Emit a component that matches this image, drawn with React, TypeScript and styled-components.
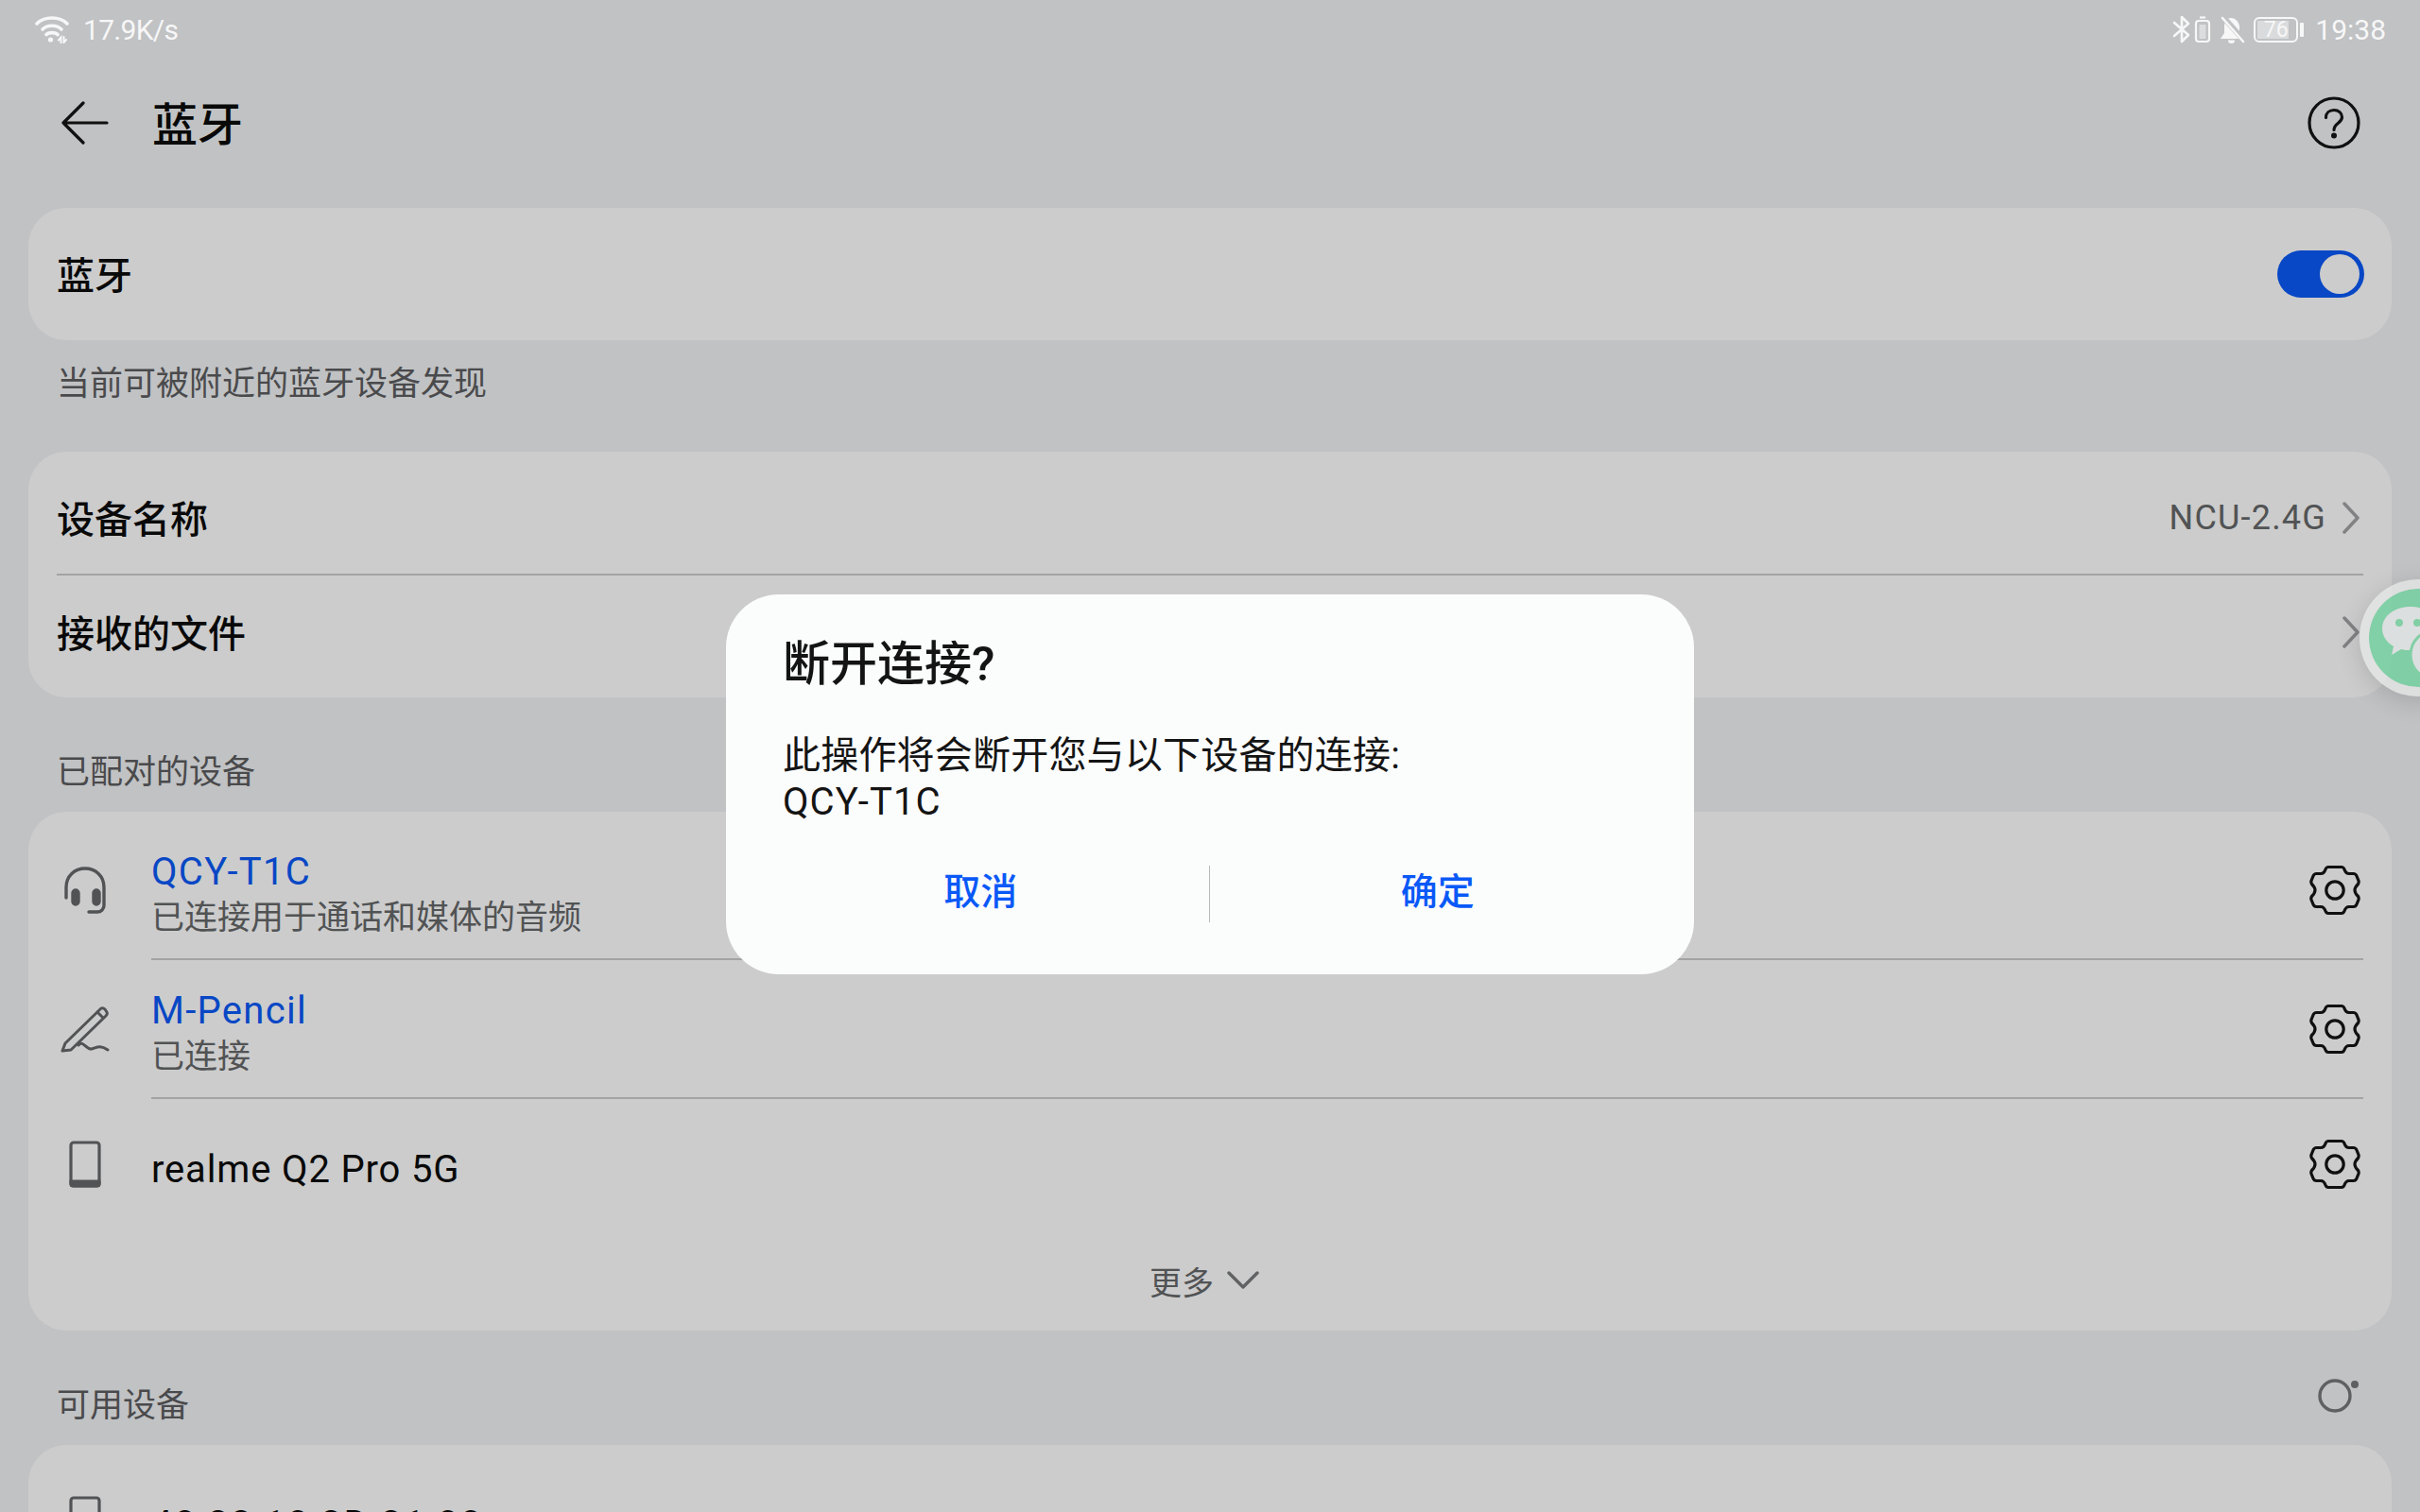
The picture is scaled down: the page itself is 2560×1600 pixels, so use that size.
import React from "react";
import styled, { createGlobalStyle } from "styled-components";

const GlobalStyle = createGlobalStyle`
  html, body {
    margin: 0;
    padding: 0;
  }
  body {
    font-family: Roboto, "Noto Sans CJK SC", sans-serif;
  }
`;

const Screen = styled.div`
  position: relative;
  width: 2560px;
  height: 1600px;
  overflow: hidden;
  background: #f1f3f5;
  color: #0c0c0c;
`;

const Header = styled.header`
  height: 136px;
  margin: 62px 0 22px;
  padding: 0 63px 0 65px;
  display: flex;
  align-items: center;
`;

const PageTitle = styled.h1`
  flex: 1;
  margin: 0 0 0 46px;
  padding-top: 5px;
  font-size: 48px;
  font-weight: 500;
  line-height: 60px;
`;

const Card = styled.section<{ $top?: number; $bottom?: number }>`
  margin: 0 30px;
  padding: ${(p) => p.$top ?? 0}px 0 ${(p) => p.$bottom ?? 0}px;
  background: #fff;
  border-radius: 40px;
`;

const Row = styled.div<{ $h: number }>`
  height: ${(p) => p.$h}px;
  display: flex;
  align-items: center;
  padding: 0 33px 0 30px;
`;

const SimpleRow = styled(Row)`
  justify-content: space-between;
`;

const RowLabel = styled.span`
  font-size: 40px;
  font-weight: 500;
  line-height: 50px;
  padding-top: 6px;
`;

const Hairline = styled.div<{ $left: number }>`
  height: 2px;
  margin: -1px 30px -1px ${(p) => p.$left}px;
  background: rgba(0, 0, 0, 0.2);
`;

const Caption = styled.div`
  height: 118px;
  padding: 24px 60px 0;
  box-sizing: border-box;
  font-size: 35px;
  line-height: 46px;
  color: #5d5d5f;
`;

const SectionHead = styled.div`
  height: 121px;
  padding: 0 63px 18px 60px;
  box-sizing: border-box;
  display: flex;
  align-items: flex-end;
  justify-content: space-between;
  font-size: 35px;
  line-height: 46px;
  color: #5d5d5f;
`;

const RefreshIcon = styled.svg`
  align-self: flex-start;
  margin-top: 47px;
`;

const Toggle = styled.div`
  width: 92px;
  height: 50px;
  box-sizing: border-box;
  padding: 4px 5px;
  margin-right: -4px;
  border-radius: 25px;
  background: #0a59f7;
  display: flex;
  justify-content: flex-end;
`;

const Knob = styled.div`
  width: 42px;
  height: 42px;
  border-radius: 50%;
  background: #fff;
`;

const ValueGroup = styled.div`
  display: flex;
  align-items: center;
  gap: 17px;
  margin-right: 1px;
  color: #66686a;
  font-size: 36px;
  letter-spacing: 1.2px;
`;

const DeviceIcon = styled.div`
  width: 60px;
  margin-right: 40px;
  flex: none;
  display: flex;
  justify-content: center;
`;

const DeviceText = styled.div`
  flex: 1;
  padding-top: 10px;
  display: flex;
  flex-direction: column;
`;

const DeviceName = styled.div<{ $active?: boolean }>`
  font-size: 40px;
  line-height: 50px;
  margin-top: ${(p) => (p.$active ? 0 : 2)}px;
  color: ${(p) => (p.$active ? "#0a59f7" : "#0c0c0c")};
  letter-spacing: ${(p) => (p.$active ? 1.3 : 0.85)}px;
`;

const DeviceAddress = styled(DeviceName)`
  letter-spacing: 1.7px;
`;

const DeviceStatus = styled.div`
  font-size: 35px;
  line-height: 48px;
  color: #66686a;
`;

const MoreRow = styled.div`
  height: 106px;
  display: flex;
  align-items: center;
  justify-content: center;
  gap: 14px;
  padding-right: 12px;
  font-size: 34px;
  color: #66686a;
`;

const Scrim = styled.div`
  position: absolute;
  inset: 0;
  background: rgba(0, 0, 0, 0.2);
  display: flex;
  justify-content: center;
  padding-top: 629px;
  box-sizing: border-box;
`;

const Dialog = styled.div`
  width: 1024px;
  height: 402px;
  box-sizing: border-box;
  padding: 43px 26px 0;
  background: #fbfcfc;
  border-radius: 56px;
`;

const DialogTitle = styled.h2`
  margin: 0 34px;
  font-size: 50px;
  font-weight: 500;
  line-height: 62px;
  color: #141414;
`;

const DialogBody = styled.p`
  margin: 41px 34px 0;
  font-size: 40px;
  line-height: 49px;
  letter-spacing: 0.2px;
  color: #141414;
`;

const DialogDevice = styled.span`
  letter-spacing: 1.1px;
`;

const DialogActions = styled.div`
  margin: 43px 0 0 2px;
  height: 60px;
  display: flex;
  align-items: center;
`;

const DialogButton = styled.button`
  flex: 1;
  height: 60px;
  padding: 0 0 4px;
  border: 0;
  background: none;
  font-family: inherit;
  font-size: 39px;
  font-weight: 500;
  line-height: 40px;
  color: #0a59f7;
  &:last-child {
    padding-right: 4px;
  }
`;

const ActionDivider = styled.div`
  width: 1px;
  height: 60px;
  background: #b9b9b9;
`;

const StatusBar = styled.div`
  position: absolute;
  top: 0;
  left: 0;
  right: 0;
  height: 62px;
  padding: 0 36px 0 37px;
  display: flex;
  align-items: center;
  justify-content: space-between;
  box-sizing: border-box;
  color: #f7f7f7;
  font-size: 30px;
`;

const StatusGroup = styled.div`
  display: flex;
  align-items: center;
`;

const StatusIcon = styled.svg<{ $gap?: number }>`
  margin-left: ${(p) => p.$gap ?? 0}px;
  flex: none;
`;

const Speed = styled.span`
  margin-left: 15px;
  letter-spacing: -0.7px;
`;

const Clock = styled.span`
  margin-left: 12px;
`;

const BatteryBox = styled.div`
  position: relative;
  width: 47px;
  height: 27px;
  margin-left: 9px;
  box-sizing: border-box;
  border: 2.5px solid #f7f7f7;
  border-radius: 6px;
  overflow: hidden;
  display: flex;
  align-items: center;
  justify-content: center;
  font-size: 23px;
  line-height: 1;
`;

const BatteryFill = styled.div`
  position: absolute;
  left: 2px;
  top: 2px;
  bottom: 2px;
  width: 76%;
  background: rgba(255, 255, 255, 0.42);
`;

const BatteryValue = styled.span`
  position: relative;
`;

const BatteryCap = styled.div`
  width: 4px;
  height: 15px;
  margin-left: 2px;
  border-radius: 1px;
  background: #f7f7f7;
`;

const Floating = styled.div`
  position: absolute;
  left: 2496px;
  top: 613px;
  width: 124px;
  height: 124px;
  box-sizing: border-box;
  border: 10px solid rgba(232, 235, 234, 0.7);
  background: rgba(106, 209, 155, 0.75);
  background-clip: padding-box;
  border-radius: 50%;
  box-shadow: 0 6px 26px rgba(0, 0, 0, 0.14);
  overflow: hidden;
`;

const Stroke = ({ size, h, children, w = 3, color = "currentColor" }: any) => (
  <svg width={size} height={h ?? size} viewBox={`0 0 ${size} ${h ?? size}`} fill="none" stroke={color} strokeWidth={w} strokeLinecap="round" strokeLinejoin="round">
    {children}
  </svg>
);

const Gear = () => (
  <svg width="54" height="54" viewBox="0 0 54 54" fill="none" stroke="#141414" strokeWidth="3.2" strokeLinejoin="round">
    <path d="M20 2.500H34Q36 2.500 37 5Q38.500 9.500 42 9.500H46.500Q49 9.500 50 12L52 17Q52.500 19 51.500 20.500Q48 24 48 27Q48 30 51.500 33.500Q52.500 35 52 37L50 42Q49 44.500 46.500 44.500H42Q38.500 44.500 37 49Q36 51.500 34 51.500H20Q18 51.500 17 49Q15.500 44.500 12 44.500H7.500Q5 44.500 4 42L2 37Q1.500 35 2.500 33.500Q6 30 6 27Q6 24 2.500 20.500Q1.500 19 2 17L4 12Q5 9.500 7.500 9.500H12Q15.500 9.500 17 5Q18 2.500 20 2.500Z" />
    <circle cx="27" cy="27" r="9.200" />
  </svg>
);

const Chevron = () => (
  <Stroke size={18} h={34} w={3.5} color="#a3a3a5">
    <path d="M2 2l14 15L2 32" />
  </Stroke>
);

export default function App() {
  return (
    <Screen>
      <GlobalStyle />
      <Header>
        <Stroke size={50} h={46} w={3.2} color="#141414">
          <path d="M23 2L2 23l21 21M2 23h46" />
        </Stroke>
        <PageTitle>蓝牙</PageTitle>
        <Stroke size={56} w={3.2} color="#141414">
          <circle cx="28" cy="28" r="26" />
          <path d="M19.500 22.500c0-4.800 3.600-8 8.500-8s8.500 3.100 8.500 7.500c0 6.500-8.500 6-8.500 13.500" />
          <circle cx="28" cy="41.500" r="1.400" fill="#141414" />
        </Stroke>
      </Header>

      <Card>
        <SimpleRow $h={140}>
          <RowLabel>蓝牙</RowLabel>
          <Toggle>
            <Knob />
          </Toggle>
        </SimpleRow>
      </Card>
      <Caption>当前可被附近的蓝牙设备发现</Caption>

      <Card $top={10} $bottom={8}>
        <SimpleRow $h={120}>
          <RowLabel>设备名称</RowLabel>
          <ValueGroup>
            NCU-2.4G
            <Chevron />
          </ValueGroup>
        </SimpleRow>
        <Hairline $left={30} />
        <SimpleRow $h={122}>
          <RowLabel>接收的文件</RowLabel>
          <ValueGroup>
            <Chevron />
          </ValueGroup>
        </SimpleRow>
      </Card>

      <SectionHead>已配对的设备</SectionHead>

      <Card $top={9}>
        <Row $h={147}>
          <DeviceIcon>
            <Stroke size={46} h={50} w={3.4} color="#66686a">
              <path d="M3 33V22C3 10 12 2 23 2S43 10 43 22V41C43 45 40 48 36 48H27" />
              <rect x="10" y="25" width="6" height="15" rx="3" fill="#66686a" />
              <rect x="32" y="25" width="6" height="15" rx="3" fill="#66686a" />
            </Stroke>
          </DeviceIcon>
          <DeviceText>
            <DeviceName $active>QCY-T1C</DeviceName>
            <DeviceStatus>已连接用于通话和媒体的音频</DeviceStatus>
          </DeviceText>
          <Gear />
        </Row>
        <Hairline $left={130} />
        <Row $h={147}>
          <DeviceIcon>
            <Stroke size={52} h={50} w={3} color="#66686a">
              <path d="M2 48L5 40L43 3Q45 2 47 4L49 7Q50 9 48 11L11 47Z" />
              <path d="M39 7L45 13" />
              <path d="M19 42C24 36 27 47 33 46C38 45 41 41 50 47" />
            </Stroke>
          </DeviceIcon>
          <DeviceText>
            <DeviceName $active>M-Pencil</DeviceName>
            <DeviceStatus>已连接</DeviceStatus>
          </DeviceText>
          <Gear />
        </Row>
        <Hairline $left={130} />
        <Row $h={140}>
          <DeviceIcon>
            <Stroke size={34} h={50} w={3.2} color="#66686a">
              <rect x="2" y="2" width="30" height="46" rx="3" />
              <path d="M2 43h30v3a2 2 0 0 1-2 2H4a2 2 0 0 1-2-2z" fill="#66686a" />
            </Stroke>
          </DeviceIcon>
          <DeviceText>
            <DeviceName>realme Q2 Pro 5G</DeviceName>
          </DeviceText>
          <Gear />
        </Row>
        <MoreRow>
          更多
          <Stroke size={34} h={20} w={3.4} color="#7a7b7d">
            <path d="M2 2l15 15L32 2" />
          </Stroke>
        </MoreRow>
      </Card>

      <SectionHead>
        可用设备
        <RefreshIcon width="46" height="40" viewBox="0 0 46 40" fill="none">
          <circle cx="19" cy="22" r="16" stroke="#78797b" strokeWidth="3.4" />
          <circle cx="40" cy="10" r="4" fill="#78797b" />
        </RefreshIcon>
      </SectionHead>

      <Card>
        <Row $h={158}>
          <DeviceIcon>
            <Stroke size={34} h={50} w={3.2} color="#66686a">
              <rect x="2" y="2" width="30" height="46" rx="3" />
            </Stroke>
          </DeviceIcon>
          <DeviceText>
            <DeviceAddress>48:33:10:3D:31:00</DeviceAddress>
          </DeviceText>
        </Row>
      </Card>

      <Scrim>
        <Dialog>
          <DialogTitle>断开连接?</DialogTitle>
          <DialogBody>
            此操作将会断开您与以下设备的连接:
            <br />
            <DialogDevice>QCY-T1C</DialogDevice>
          </DialogBody>
          <DialogActions>
            <DialogButton>取消</DialogButton>
            <ActionDivider />
            <DialogButton>确定</DialogButton>
          </DialogActions>
        </Dialog>
      </Scrim>

      <Floating>
        <svg width="104" height="104" viewBox="0 0 104 104">
          <path d="M44 19C27 19 14 29 14 42C14 50 19 57 26 61L24 70L34 64C37 65 41 65 44 65C61 65 74 55 74 42S61 19 44 19Z" fill="#dcdfdf" />
          <circle cx="32" cy="36" r="4" fill="#82cfa6" />
          <circle cx="51" cy="36" r="4" fill="#82cfa6" />
          <circle cx="70" cy="70" r="26" fill="#dcdfdf" stroke="#82cfa6" strokeWidth="3" />
        </svg>
      </Floating>

      <StatusBar>
        <StatusGroup>
          <svg width="36" height="30" viewBox="0 0 36 30" fill="none" stroke="#f7f7f7" strokeWidth="3.6" strokeLinecap="round">
            <path d="M2 9c8-8 24-8 32 0" />
            <path d="M8 15c5-5 15-5 20 0" />
            <path d="M12 20.500c3-2.500 9-2.500 12 0" />
            <circle cx="16.500" cy="26" r="2.600" fill="#f7f7f7" stroke="none" />
            <path d="M25 26.500l2.500-3v6M30.500 23v6l2.500-3" strokeWidth="2" />
          </svg>
          <Speed>17.9K/s</Speed>
        </StatusGroup>
        <StatusGroup>
          <svg width="20" height="30" viewBox="0 0 20 30" fill="none" stroke="#f7f7f7" strokeWidth="2.600" strokeLinecap="round" strokeLinejoin="round">
            <path d="M2 8l15 13-7 7V2l7 7L2 22" />
          </svg>
          <StatusIcon $gap={3} width="18" height="30" viewBox="0 0 18 30" fill="none" stroke="#f7f7f7" strokeWidth="2.200">
            <rect x="2" y="6" width="14" height="22" rx="3" />
            <path d="M6 2.500h6" />
            <rect x="5.500" y="10" width="7" height="15" fill="#f7f7f7" fillOpacity=".5" stroke="none" />
          </StatusIcon>
          <StatusIcon $gap={8} width="28" height="30" viewBox="0 0 28 30">
            <path d="M13 3C8 3 6 8 6 12V19L2 25H25L22 19V12C22 8 18 3 13 3Z" fill="#f7f7f7" />
            <path d="M10 26.500a3.500 3.500 0 0 0 7 0z" fill="#f7f7f7" />
            <path d="M3 0L27 27" stroke="#c1c2c4" strokeWidth="6" />
            <path d="M4 3L26 28" stroke="#f7f7f7" strokeWidth="2.600" strokeLinecap="round" />
          </StatusIcon>
          <BatteryBox>
            <BatteryFill />
            <BatteryValue>76</BatteryValue>
          </BatteryBox>
          <BatteryCap />
          <Clock>19:38</Clock>
        </StatusGroup>
      </StatusBar>
    </Screen>
  );
}
